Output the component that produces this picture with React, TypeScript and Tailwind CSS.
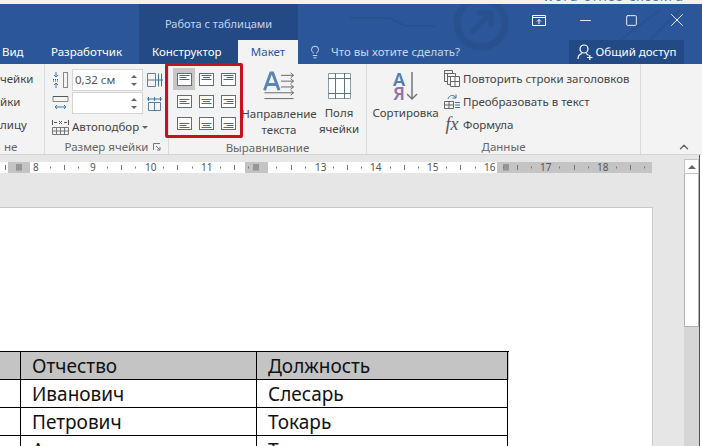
import { ChevronUp, Lightbulb, Minus, Square, X } from 'lucide-react'

const font = "font-['Noto_Sans',sans-serif]"

// positions of the nine alignment buttons, top-left to bottom-right
const alignments = [
  { h: 'l', v: 't' },
  { h: 'c', v: 't' },
  { h: 'r', v: 't' },
  { h: 'l', v: 'm' },
  { h: 'c', v: 'm' },
  { h: 'r', v: 'm' },
  { h: 'l', v: 'b' },
  { h: 'c', v: 'b' },
  { h: 'r', v: 'b' }
]

function AlignIcon({ h, v }: { h: string; v: string }) {
  const startY = v === 't' ? 2.5 : v === 'm' ? 4.5 : 6.5
  const widths = [10, 7, 10]
  return (
    <svg width="15" height="13" viewBox="0 0 15 13" fill="none">
      <rect x="0.5" y="0.5" width="14" height="12" fill="#fff" stroke="#5f6e7a" />
      {widths.map((w, i) => {
        const x = h === 'l' ? 2.5 : h === 'c' ? 7.5 - w / 2 : 12.5 - w
        return <path key={i} d={`M${x} ${startY + i * 2}h${w}`} stroke={v === 't' ? '#55636e' : '#3f7299'} />
      })}
    </svg>
  )
}

function GroupLabel({ children }: { children: React.ReactNode }) {
  return <div className="h-[17px] text-center text-[11.5px] leading-[20px] text-[#666]">{children}</div>
}

function Spinner({ value }: { value?: string }) {
  return (
    <div className="flex h-[22px] w-[71px] items-center justify-between border border-[#d4d4d4] bg-white pl-[2px] pr-[5px] text-[#555]">
      <span>{value}</span>
      <div className="flex flex-col gap-[5px]">
        <div className="h-0 w-0 border-x-[3px] border-b-[3px] border-x-transparent border-b-[#666]" />
        <div className="h-0 w-0 border-x-[3px] border-t-[3px] border-x-transparent border-t-[#666]" />
      </div>
    </div>
  )
}

function Ruler() {
  const numbers = [
    { n: '8', x: 33 },
    { n: '9', x: 90 },
    { n: '10', x: 145 },
    { n: '11', x: 201 },
    { n: '13', x: 315 },
    { n: '14', x: 370 },
    { n: '15', x: 427 },
    { n: '16', x: 484 },
    { n: '17', x: 540 },
    { n: '18', x: 597 }
  ]
  // every fourth slot is where a number sits
  const ticks = Array.from({ length: 43 }, (_, i) => i).filter(i => i % 4 !== 3)
  return (
    <div className="relative h-[11px] w-[652px] shrink-0 bg-white text-[10px] leading-[11px] text-[#555]">
      <div className="absolute left-[8px] top-0 h-full w-[22px] bg-[#c4c4c4]" />
      <div className="absolute left-[245px] top-0 h-full w-[23px] bg-[#c4c4c4]" />
      <div className="absolute left-[497px] top-0 h-full w-[155px] bg-[#c4c4c4]" />
      <svg className="absolute inset-0" width="652" height="11" fill="none">
        <path d="M5.500 3v5" stroke="#777" />
        {ticks.map(i => {
          const x = Math.round(50 + i * 14.15) + 0.5
          return <path key={i} d={`M${x} ${i % 2 ? 3 : 4.500}v${i % 2 ? 5 : 2}`} stroke="#777" />
        })}
        <path d="M16 3h6M16 5h6M16 7h6M17 2v7M19 2v7M21 2v7M253 3h6M253 5h6M253 7h6M254 2v7M256 2v7M258 2v7M503 3h6M503 5h6M503 7h6M504 2v7M506 2v7M508 2v7" stroke="#777" strokeWidth="0.7" />
      </svg>
      {numbers.map(item => (
        <span key={item.n} className="absolute top-0" style={{ left: item.x }}>
          {item.n}
        </span>
      ))}
    </div>
  )
}

function Row({ a, b, header }: { a: string; b: string; header?: boolean }) {
  const cell = 'flex h-[28px] items-center border-b border-l border-black pl-[11px] pt-[1px] text-[19px] text-[#111]'
  return (
    <div className={`flex ${header ? 'bg-[#c4c4c4]' : 'bg-white'}`}>
      <div className="h-[28px] w-[20px] border-b border-black" />
      <div className={`${cell} w-[236px]`}>{a}</div>
      <div className={`${cell} w-[252px] border-r`}>{b}</div>
    </div>
  )
}

export default function App() {
  return (
    <div className={`${font} relative flex h-[446px] w-[702px] flex-col overflow-hidden bg-[#e6e6e6]`}>
      {/* sliver of the desktop above the window */}
      <div className="flex h-[4px] shrink-0 justify-end overflow-hidden bg-[#f4f1e6] pr-[18px]">
        <span className="mt-[-12px] text-[13px] leading-[16px] tracking-[1px] text-[#4a78b5]">word-office-excel.ru</span>
      </div>

      {/* title bar + tabs */}
      <div className="relative h-[60px] shrink-0 bg-[#2b579a] text-white">
        <svg className="absolute inset-0" width="702" height="60" fill="none" stroke="#29518f" strokeWidth="2">
          <circle cx="481" cy="19" r="24" strokeWidth="7" />
          <path d="M471 29l20-20M477 9h14v14" strokeWidth="5" />
          <path d="M350 14h40l15 8h30M620 36l40-30M650 36l30-30" />
        </svg>
        <div className="relative flex h-[32px] items-start">
          <div className="ml-[139px] flex h-[60px] w-[159px] justify-center bg-[#234a85] pt-[12px] text-[11px] leading-[16px] text-[#c5d3e8]">
            Работа с таблицами
          </div>
          <div className="ml-auto mr-[2px] flex h-[32px] items-center text-[#e4ebf5]">
            <div className="flex w-[47px] justify-center">
              <svg width="14" height="11" viewBox="0 0 14 11" fill="none" stroke="#fff">
                <path d="M.5.500h13v10H.5zM.5 2.500h13M7 9V4.500M5 6.500l2-2 2 2" />
              </svg>
            </div>
            <div className="flex w-[46px] justify-center">
              <Minus size={17} strokeWidth={1} absoluteStrokeWidth />
            </div>
            <div className="flex w-[46px] justify-center">
              <Square size={13} strokeWidth={1} absoluteStrokeWidth />
            </div>
            <div className="flex w-[46px] justify-center">
              <X size={22} strokeWidth={1} absoluteStrokeWidth />
            </div>
          </div>
        </div>
        <div className="absolute inset-x-0 bottom-0 flex h-[24px] items-center text-[11.5px]">
          <span className="ml-[2px] w-[21px]">Вид</span>
          <span className="ml-[28px] w-[73px] whitespace-nowrap">Разработчик</span>
          <span className="ml-[28px] w-[70px] whitespace-nowrap">Конструктор</span>
          <div className="ml-[16px] flex h-[24px] w-[60px] items-center justify-center bg-[#f3f3f3] text-[#2b579a]">Макет</div>
          <Lightbulb size={14} strokeWidth={1.300} className="ml-[10px]" />
          <span className="ml-[9px] text-[#c9d6ea]">Что вы хотите сделать?</span>
          <div className="ml-auto mr-[18px] flex h-[24px] w-[115px] items-center justify-center gap-[3px] bg-[#234a85]">
            <svg width="16" height="16" viewBox="0 0 16 16" fill="none" stroke="#fff" strokeWidth="1.200">
              <circle cx="7" cy="5" r="4" />
              <path d="M1 15c0-3 2-5 4-5.500M9 9.500c1 .3 2 1 2.500 2M10 13.500h5.500M12.800 11v5" />
            </svg>
            <span>Общий доступ</span>
          </div>
        </div>
      </div>

      {/* ribbon */}
      <div className="flex h-[91px] shrink-0 border-b border-[#d4d4d4] bg-[#f3f3f3] text-[11.5px] text-[#444]">
        <div className="flex w-[45px] flex-col border-r border-[#dadada]">
          <div className="flex h-[74px] flex-col gap-[6px] pt-[6px] leading-[17px]">
            <span>чейки</span>
            <span>йки</span>
            <span>лицу</span>
          </div>
          <GroupLabel><span className="block pl-[4px] text-left">не</span></GroupLabel>
        </div>

        <div className="flex w-[124px] flex-col border-r border-[#dadada]">
          <div className="flex h-[74px] flex-col pl-[7px] pt-[5px]">
            <div className="flex items-center gap-[3px]">
              <svg width="17" height="20" viewBox="0 0 17 20" fill="none" stroke="#5d7f9b">
                <path d="M4 2v5M2 5l2 2 2-2M4 18v-5M2 15l2-2 2 2" stroke="#3c76a8" />
                <path d="M1 9.500h6M1 11h6" strokeDasharray="1 1" stroke="#555" />
                <rect x="11.500" y="2.500" width="4" height="15" stroke="#888" />
              </svg>
              <Spinner value="0,32 см" />
              <svg className="ml-[1px]" width="16" height="14" viewBox="0 0 16 14" fill="none" stroke="#5d7f9b">
                <path d="M.5.500h8v13h-8zM.5 7h8" />
                <path d="M11.500 .5v13M14.500 .5v13M9 7h7" stroke="#3c76a8" />
              </svg>
            </div>
            <div className="mt-[1px] flex items-center gap-[3px]">
              <svg width="17" height="20" viewBox="0 0 17 20" fill="none">
                <path d="M1 3.500h15v5H1z" stroke="#888" />
                <path d="M1 3.500h15" stroke="#555" />
                <path d="M3 14h11M5 12l-2 2 2 2M12 12l2 2-2 2" stroke="#3c76a8" />
              </svg>
              <Spinner />
              <svg className="ml-[1px]" width="16" height="15" viewBox="0 0 16 15" fill="none" stroke="#5d7f9b">
                <path d="M1.500 6.500h12v8h-12zM7.500 6.500v8" />
                <path d="M1.500 1v4M7.500 1v4M13.500 1v4M0 3h15" stroke="#3c76a8" />
              </svg>
            </div>
            <div className="mt-[3px] flex h-[20px] items-center gap-[3px]">
              <svg width="17" height="17" viewBox="0 0 17 17" fill="none">
                <path d="M.5 1v5M16.500 1v5M2 3.500h3M12 3.500h3M7 2l3 3M10 2L7 5" stroke="#555" />
                <path d="M.5 8.500h16v7H.5zM.5 12h16M4.500 8.500v7M8.500 8.500v7M12.500 8.500v7" stroke="#777" />
              </svg>
              <span>Автоподбор</span>
              <div className="h-0 w-0 border-x-[3px] border-t-[3px] border-x-transparent border-t-[#666]" />
            </div>
          </div>
          <div className="relative">
            <GroupLabel>Размер ячейки</GroupLabel>
            <svg className="absolute right-[7px] top-[6px]" width="8" height="8" viewBox="0 0 8 8" fill="none" stroke="#777">
              <path d="M.5 7V.5H7M3 3l4 4M7 4v3H4" />
            </svg>
          </div>
        </div>

        <div className="flex w-[198px] flex-col border-r border-[#dadada]">
          <div className="flex h-[74px]">
            <div className="relative z-10 ml-[-4px] mt-[-1px] box-border grid h-[75px] w-[78px] shrink-0 grid-cols-3 content-start rounded-[2px] border-[3px] border-[#c8101f] pl-[5px] pt-[2px]">
              {alignments.map((item, i) => (
                <div key={i} className={`flex h-[22px] w-[22px] items-center justify-center ${i === 0 ? 'bg-[#c6c6c6]' : ''}`}>
                  <AlignIcon h={item.h} v={item.v} />
                </div>
              ))}
            </div>
            <div className="ml-[-1px] flex w-[74px] flex-col items-center pt-[6px] leading-[16px]">
              <svg width="33" height="32" viewBox="0 0 33 32" fill="none">
                <path d="M1 21L7.500 3h2L16 21M3.500 15h10" stroke="#5a84b4" strokeWidth="3" />
                <path d="M18 5.500h13M18 11.500h13M18 17.500h13M1 23.500h30M1 29.500h30M28 3l3 2.500-3 2.500M28 9l3 2.500-3 2.500M28 15l3 2.500-3 2.500M28 21l3 2.500-3 2.500" stroke="#666" />
              </svg>
              <span className="mt-[5px] whitespace-nowrap">Направление</span>
              <span>текста</span>
            </div>
            <div className="flex w-[46px] flex-col items-center pt-[9px] leading-[16px]">
              <svg width="23" height="26" viewBox="0 0 23 26" fill="none">
                <path d="M.5.500h22v25H.5z" stroke="#8d99a3" fill="#fff" />
                <path d="M7.500 0v26M16.500 0v26M0 5.500h23M0 20.500h23" stroke="#5f7386" />
              </svg>
              <span className="mt-[6px]">Поля</span>
              <span>ячейки</span>
            </div>
          </div>
          <GroupLabel>Выравнивание</GroupLabel>
        </div>

        <div className="flex w-[274px] flex-col border-r border-[#dadada]">
          <div className="flex h-[74px]">
            <div className="flex w-[77px] flex-col items-center pt-[7px]">
              <div className="flex items-center gap-[1px]">
                <div className="flex flex-col text-[18px] font-semibold leading-[14px]">
                  <span className="text-[#4f7fb5]">A</span>
                  <span className="text-[#8e72ad]">Я</span>
                </div>
                <svg width="12" height="30" viewBox="0 0 12 30" fill="none" stroke="#777" strokeWidth="1.500">
                  <path d="M6 1v27M1 23l5 5 5-5" />
                </svg>
              </div>
              <span className="mt-[3px] leading-[17px]">Сортировка</span>
            </div>
            <div className="flex flex-col gap-[6px] pt-[6px] leading-[17px]">
              <div className="flex items-center gap-[3px]">
                <svg width="16" height="17" viewBox="0 0 16 17" fill="none" stroke="#666">
                  <path d="M.5.500h8v3h-8zM.5.500v11h3M3.500 3.500h8v3h-8zM3.500 3.500v11h3" />
                  <path d="M6.500 6.500h9v10h-9zM6.500 11.500h9M11 6.500v10" fill="#fff" />
                </svg>
                <span className="whitespace-nowrap">Повторить строки заголовков</span>
              </div>
              <div className="flex items-center gap-[3px]">
                <svg width="16" height="17" viewBox="0 0 16 17" fill="none">
                  <path d="M.5 8.500h9v7h-9zM.5 12h9M5 8.500v7" stroke="#666" />
                  <path d="M11 9.500h5M11 12h5M11 14.500h5" stroke="#3c76a8" />
                  <path d="M4 6c1-4 6-5 8-1M12 1.500v3.500H8.500" stroke="#3c76a8" />
                </svg>
                <span>Преобразовать в текст</span>
              </div>
              <div className="flex items-center gap-[3px]">
                <span className="flex h-[17px] w-[16px] items-center justify-center font-['Liberation_Serif',serif] text-[18px] italic text-[#555]">fx</span>
                <span>Формула</span>
              </div>
            </div>
          </div>
          <GroupLabel>Данные</GroupLabel>
        </div>

        <div className="flex flex-1 items-end justify-end pr-[11px]">
          <ChevronUp size={14} strokeWidth={2.500} className="text-[#666]" />
        </div>
      </div>

      {/* ruler and document */}
      <div className="flex min-h-0 flex-1 overflow-hidden">
        <div className="flex w-[684px] flex-col pt-[7px]">
          <Ruler />
          <div className="mt-[34px] w-[653px] flex-1 border-r border-t border-[#c8c8c8] bg-white pt-[143px]">
            <div className="w-[509px] border-t border-black">
              <Row a="Отчество" b="Должность" header />
              <Row a="Иванович" b="Слесарь" />
              <Row a="Петрович" b="Токарь" />
              <Row a="Алексеевич" b="Токарь" />
            </div>
          </div>
        </div>
        <div className="flex w-[15px] flex-col pt-[4px]">
          <div className="flex h-[15px] shrink-0 items-center justify-center border border-[#c4c4c4] bg-white">
            <div className="h-0 w-0 border-x-[4px] border-b-[4px] border-x-transparent border-b-[#666]" />
          </div>
          <div className="h-[153px] shrink-0 border-x border-b border-[#b0b0b0] bg-white" />
          <div className="flex-1 bg-[#d6d6d6]" />
        </div>
        <div className="w-[1px] bg-[#2b579a]" />
        <div className="w-[2px] bg-white" />
      </div>
    </div>
  )
}
